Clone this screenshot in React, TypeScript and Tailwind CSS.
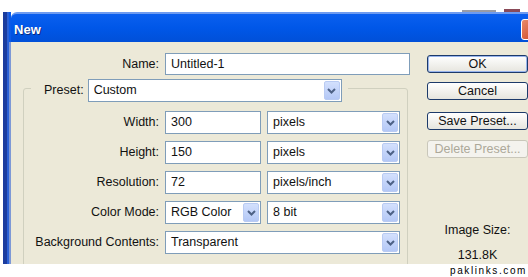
import React from 'react';

const ui = "font-['Liberation_Sans',Arial,sans-serif]";

function Chevron() {
  return (
    <svg width="9" height="6" viewBox="0 0 9 6" className="block">
      <path d="M1 1l3.5 3.5L8 1" fill="none" stroke="#4d6185" strokeWidth="2" />
    </svg>
  );
}

function TextBox({ value, className }: { value: string; className: string }) {
  return (
    <div
      className={`flex items-center border border-[#7f9db9] bg-white pl-[5px] text-[12.5px] text-[#111] ${className}`}
    >
      {value}
    </div>
  );
}

function Combo({ value, className }: { value: string; className: string }) {
  return (
    <div
      className={`flex items-center border border-[#7f9db9] bg-white pl-[5px] pr-[1px] text-[12.5px] text-[#111] ${className}`}
    >
      <span className="flex-1">{value}</span>
      <div className="flex h-[19px] w-[16px] items-center justify-center rounded-[2px] border border-[#b9cbf3] bg-gradient-to-b from-[#d3e0fd] to-[#b4c8f6]">
        <Chevron />
      </div>
    </div>
  );
}

function Row({ label, children }: { label: string; children: React.ReactNode }) {
  return (
    <div className="mb-[7px] flex h-[23px] items-center gap-[6px]">
      <div className="w-[135px] text-right text-[12.5px] text-[#111]">{label}</div>
      {children}
    </div>
  );
}

function XpButton({
  label,
  isDefault,
  disabled,
  className,
}: {
  label: string;
  isDefault?: boolean;
  disabled?: boolean;
  className: string;
}) {
  return (
    <div
      className={`flex h-[18px] w-[101px] items-center justify-center rounded-[3px] border text-[12.5px] ${
        disabled
          ? 'border-[#c9c7ba] bg-[#f4f3ee] text-[#aca899]'
          : 'border-[#1c3a6a] bg-gradient-to-b from-white to-[#e6e5de] text-[#111]'
      } ${isDefault ? 'shadow-[inset_0_0_0_1px_#98b4ec]' : ''} ${className}`}
    >
      {label}
    </div>
  );
}

export default function App() {
  return (
    <div className={`h-[277px] w-[528px] overflow-hidden bg-white ${ui}`}>
      {/* bits of the desktop behind the dialog */}
      <div className="flex h-[12px] items-end">
        <div className="ml-[462px] h-[2px] w-[34px] bg-[#9a9ca6]" />
        <div className="ml-[8px] h-[3px] w-[16px] bg-[#8a4a58]" />
      </div>

      <div className="flex h-[252px]">
        {/* left window frame */}
        <div className="ml-[3px] w-[4px] bg-[#1b3c9e]" />
        <div className="w-[3px] bg-[#2b61d6]" />
        <div className="flex w-[2px] flex-col">
          <div className="h-[30px] bg-[#0a5ae8]" />
          <div className="flex-1 bg-[#7d98d6]" />
        </div>

        <div className="flex flex-1 flex-col">
          {/* title bar */}
          <div className="flex h-[30px] items-center justify-between rounded-tl-[6px] border-t-2 border-[#6e9bf0] bg-gradient-to-b from-[#0b5fef] via-[#0057e8] to-[#0150d8] pt-[3px]">
            <span className="ml-[3px] text-[13px] font-bold text-white [text-shadow:1px_1px_0_#0a2c82]">
              New
            </span>
            <div className="mr-[-14px] h-[21px] w-[21px] rounded-[3px] border border-white bg-gradient-to-br from-[#e98a6b] to-[#c83a12]" />
          </div>

          {/* dialog body */}
          <div className="flex flex-1 overflow-hidden bg-[#ece9d8]">
            <div className="w-[416px] shrink-0">
              <div className="mt-[11px] flex h-[22px] items-center gap-[6px]">
                <div className="w-[148px] text-right text-[12.5px] text-[#111]">Name:</div>
                <TextBox value="Untitled-1" className="h-[22px] w-[245px]" />
              </div>

              <fieldset className="ml-[12px] h-[200px] w-[385px] rounded-[3px] border border-[#d0d0bf]">
                <legend className="ml-[7px] flex items-center pr-[6px] pt-[4px]">
                  <span className="pl-[13px] pr-[4px] text-[12.5px] text-[#111]">Preset:</span>
                  <Combo value="Custom" className="h-[23px] w-[254px]" />
                </legend>
                <div className="mt-[9px]">
                  <Row label="Width:">
                    <TextBox value="300" className="h-[23px] w-[96px]" />
                    <Combo value="pixels" className="h-[23px] w-[133px]" />
                  </Row>
                  <Row label="Height:">
                    <TextBox value="150" className="h-[23px] w-[96px]" />
                    <Combo value="pixels" className="h-[23px] w-[133px]" />
                  </Row>
                  <Row label="Resolution:">
                    <TextBox value="72" className="h-[23px] w-[96px]" />
                    <Combo value="pixels/inch" className="h-[23px] w-[133px]" />
                  </Row>
                  <Row label="Color Mode:">
                    <Combo value="RGB Color" className="h-[23px] w-[96px]" />
                    <Combo value="8 bit" className="h-[23px] w-[133px]" />
                  </Row>
                  <Row label="Background Contents:">
                    <Combo value="Transparent" className="h-[23px] w-[235px]" />
                  </Row>
                </div>
              </fieldset>
            </div>

            <div className="flex shrink-0 flex-col">
              <XpButton label="OK" isDefault className="mt-[13px]" />
              <XpButton label="Cancel" className="mt-[9px]" />
              <XpButton label="Save Preset..." className="mt-[12px]" />
              <XpButton label="Delete Preset..." disabled className="mt-[10px]" />
              <div className="mt-[64px] w-[101px] text-center text-[12.5px] leading-[16px] text-[#111]">
                Image Size:
              </div>
              <div className="mt-[9px] w-[101px] text-center text-[12.5px] leading-[16px] text-[#111]">
                131.8K
              </div>
            </div>
          </div>
        </div>
      </div>

      <div className="flex justify-end pr-[1px]">
        <span className="text-[10px] leading-[13px] tracking-[1.6px] text-black">paklinks.com</span>
      </div>
    </div>
  );
}
